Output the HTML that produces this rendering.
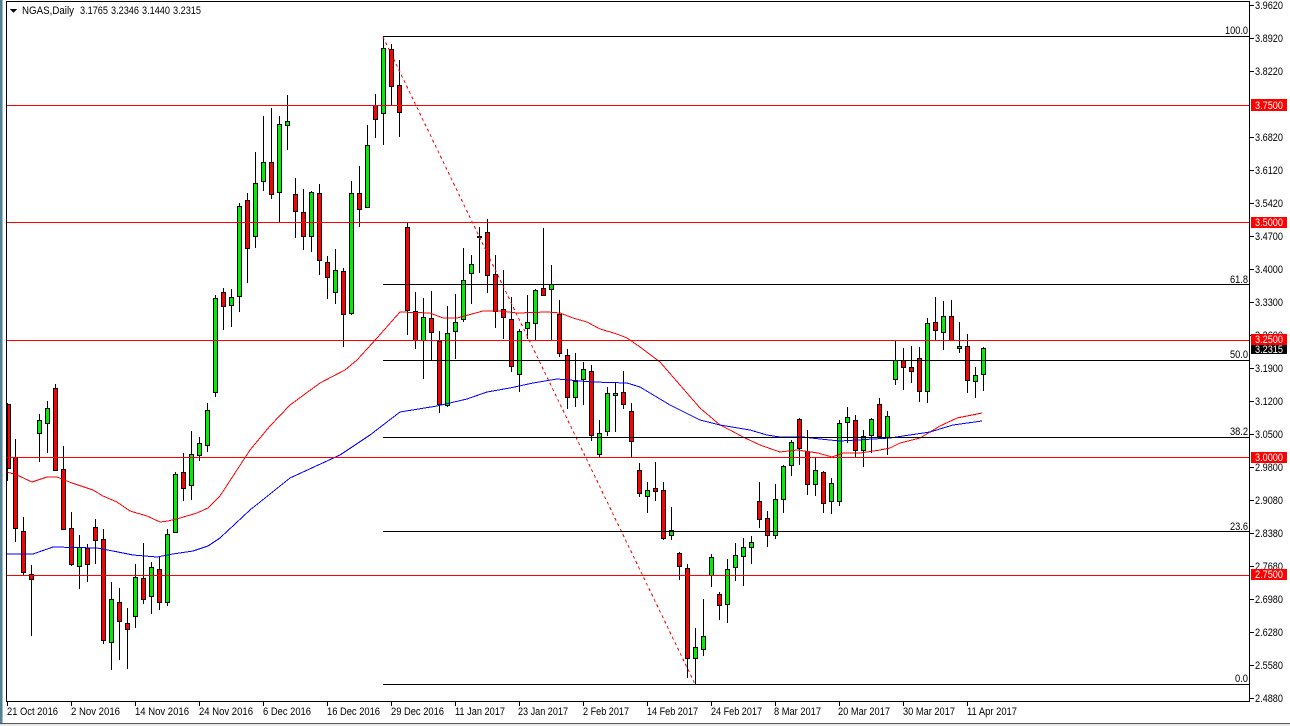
<!DOCTYPE html>
<html><head><meta charset="utf-8"><title>NGAS,Daily</title>
<style>
html,body{margin:0;padding:0;background:#fff;width:1290px;height:726px;overflow:hidden}
svg{display:block;position:absolute;left:0;top:0}
text{font-family:"Liberation Sans",sans-serif;font-size:11px;fill:#000}
</style></head><body>
<svg width="1290" height="726" viewBox="0 0 1290 726" xmlns="http://www.w3.org/2000/svg">
<rect width="1290" height="726" fill="#fff"/>
<rect x="0" y="0" width="2" height="723" fill="#4f8296"/>
<rect x="2" y="0" width="1" height="723" fill="#a9b8c0"/>
<rect x="0" y="723" width="1290" height="1" fill="#555"/>
<rect x="0" y="724" width="1290" height="2" fill="#e8e8e8"/>
<g shape-rendering="crispEdges">
<path d="M6.5 1.5H1249.5V701.5H6.5Z" fill="none" stroke="#000"/>
<path d="M1250 5.5h4M1250 38.5h4M1250 71.5h4M1250 137.5h4M1250 170.5h4M1250 203.5h4M1250 236.5h4M1250 269.5h4M1250 302.5h4M1250 335.5h4M1250 368.5h4M1250 401.5h4M1250 434.5h4M1250 467.5h4M1250 500.5h4M1250 533.5h4M1250 566.5h4M1250 599.5h4M1250 632.5h4M1250 665.5h4M1250 698.5h4" stroke="#000"/>
<path d="M7.5 702v4M71.5 702v4M135.5 702v4M199.5 702v4M263.5 702v4M327.5 702v4M391.5 702v4M455.5 702v4M519.5 702v4M583.5 702v4M647.5 702v4M711.5 702v4M775.5 702v4M839.5 702v4M903.5 702v4M967.5 702v4" stroke="#000"/>
<!-- wicks -->
<path stroke="#000" fill="none" d="M7.5 403V481M15.5 439V542M23.5 517V575M31.5 565V636M39.5 414V462M47.5 401V453M55.5 384V470M63.5 446V530M71.5 512V566M79.5 535V589M87.5 544V582M95.5 519V564M103.5 529V644M111.5 582V670M119.5 588V660M127.5 608V669M135.5 564V628M143.5 543V604M151.5 562V614M159.5 557V610M167.5 529V606M175.5 472V532M183.5 453V501M191.5 431V500M199.5 437V461M207.5 403V452M215.5 295V397M223.5 288V330M231.5 289V327M239.5 203V312M247.5 193V283M255.5 152V248M263.5 116V191M271.5 108V199M279.5 116V222M287.5 95V150M295.5 178V238M303.5 189V250M311.5 191V252M319.5 184V275M327.5 256V299M335.5 249V304M343.5 268V347M351.5 181V315M359.5 166V227M367.5 125V208M375.5 94V138M383.5 36V145M391.5 44V105M399.5 60V137M407.5 223V335M415.5 292V349M423.5 298V379M431.5 291V360M439.5 331V413M447.5 306V407M455.5 294V359M463.5 248V322M471.5 255V304M479.5 227V273M487.5 219V293M495.5 255V328M503.5 270V339M511.5 297V372M519.5 329V392M527.5 295V339M535.5 289V340M543.5 228V295M551.5 265V340M559.5 300V357M567.5 349V409M575.5 353V407M583.5 362V405M591.5 365V441M599.5 420V457M607.5 387V436M615.5 383V432M623.5 371V409M631.5 403V457M639.5 463V497M647.5 482V513M655.5 462V501M663.5 482V540M671.5 507V540M679.5 552V580M687.5 564V678M695.5 628V684M703.5 599V656M711.5 554V587M719.5 592V620M727.5 559V623M735.5 543V581M743.5 538V586M751.5 536V564M759.5 482V528M767.5 511V547M775.5 484V539M783.5 465V513M791.5 440V476M799.5 418V465M807.5 430V495M815.5 458V496M823.5 471V513M831.5 478V514M839.5 420V506M847.5 407V443M855.5 415V457M863.5 430V467M871.5 418V453M879.5 398V439M887.5 411V455M895.5 341V385M903.5 348V390M911.5 346V383M919.5 347V402M927.5 318V403M935.5 297V340M943.5 301V350M951.5 300V340M959.5 322V353M967.5 334V393M975.5 367V398M983.5 347V391"/>
<!-- red bodies -->
<path stroke="#000" fill="#f00" d="M7.5 404.5h3V468.5h-3zM13.5 457.5h4V528.5h-4zM21.5 531.5h4V572.5h-4zM29.5 574.5h4V579.5h-4zM53.5 388.5h4V470.5h-4zM61.5 469.5h4V529.5h-4zM69.5 528.5h4V564.5h-4zM85.5 548.5h4V564.5h-4zM93.5 527.5h4V540.5h-4zM101.5 539.5h4V640.5h-4zM117.5 602.5h4V621.5h-4zM125.5 623.5h4V629.5h-4zM141.5 578.5h4V599.5h-4zM157.5 569.5h4V602.5h-4zM181.5 472.5h4V488.5h-4zM221.5 292.5h4V306.5h-4zM245.5 200.5h4V248.5h-4zM269.5 162.5h4V194.5h-4zM293.5 194.5h4V211.5h-4zM301.5 212.5h4V236.5h-4zM317.5 193.5h4V260.5h-4zM325.5 262.5h4V277.5h-4zM341.5 271.5h4V314.5h-4zM357.5 193.5h4V209.5h-4zM373.5 105.5h4V119.5h-4zM389.5 49.5h4V86.5h-4zM397.5 85.5h4V112.5h-4zM405.5 227.5h4V310.5h-4zM413.5 311.5h4V340.5h-4zM429.5 318.5h4V332.5h-4zM437.5 341.5h4V404.5h-4zM485.5 232.5h4V275.5h-4zM493.5 274.5h4V311.5h-4zM501.5 309.5h4V317.5h-4zM509.5 319.5h4V366.5h-4zM541.5 288.5h4V295.5h-4zM557.5 314.5h4V353.5h-4zM565.5 355.5h4V397.5h-4zM589.5 371.5h4V435.5h-4zM621.5 392.5h4V404.5h-4zM629.5 411.5h4V441.5h-4zM637.5 470.5h4V493.5h-4zM653.5 488.5h4V491.5h-4zM661.5 490.5h4V538.5h-4zM677.5 553.5h4V566.5h-4zM685.5 568.5h4V658.5h-4zM717.5 594.5h4V605.5h-4zM757.5 501.5h4V519.5h-4zM765.5 518.5h4V535.5h-4zM797.5 419.5h4V448.5h-4zM805.5 451.5h4V484.5h-4zM821.5 472.5h4V503.5h-4zM853.5 420.5h4V450.5h-4zM877.5 404.5h4V436.5h-4zM901.5 360.5h4V367.5h-4zM909.5 367.5h4V371.5h-4zM917.5 358.5h4V391.5h-4zM933.5 322.5h4V330.5h-4zM949.5 316.5h4V340.5h-4zM965.5 346.5h4V380.5h-4z"/>
<!-- green bodies -->
<path stroke="#000" fill="#00ee00" d="M37.5 420.5h4V433.5h-4zM45.5 408.5h4V423.5h-4zM77.5 547.5h4V566.5h-4zM109.5 599.5h4V642.5h-4zM133.5 577.5h4V616.5h-4zM149.5 567.5h4V596.5h-4zM165.5 534.5h4V602.5h-4zM173.5 474.5h4V532.5h-4zM189.5 454.5h4V485.5h-4zM197.5 443.5h4V455.5h-4zM205.5 410.5h4V445.5h-4zM213.5 298.5h4V392.5h-4zM229.5 297.5h4V305.5h-4zM237.5 206.5h4V296.5h-4zM253.5 183.5h4V236.5h-4zM261.5 162.5h4V181.5h-4zM277.5 124.5h4V192.5h-4zM285.5 121.5h4V125.5h-4zM309.5 192.5h4V236.5h-4zM333.5 270.5h4V292.5h-4zM349.5 193.5h4V313.5h-4zM365.5 145.5h4V207.5h-4zM381.5 48.5h4V113.5h-4zM421.5 317.5h4V340.5h-4zM445.5 333.5h4V405.5h-4zM453.5 322.5h4V331.5h-4zM461.5 280.5h4V319.5h-4zM469.5 264.5h4V273.5h-4zM517.5 331.5h4V374.5h-4zM525.5 322.5h4V328.5h-4zM533.5 290.5h4V323.5h-4zM549.5 284.5h4V289.5h-4zM573.5 381.5h4V397.5h-4zM581.5 369.5h4V379.5h-4zM597.5 433.5h4V454.5h-4zM605.5 393.5h4V431.5h-4zM613.5 393.5h4V395.5h-4zM645.5 490.5h4V496.5h-4zM669.5 530.5h4V535.5h-4zM693.5 647.5h4V658.5h-4zM701.5 636.5h4V649.5h-4zM709.5 557.5h4V575.5h-4zM725.5 569.5h4V604.5h-4zM733.5 555.5h4V567.5h-4zM741.5 547.5h4V556.5h-4zM749.5 542.5h4V547.5h-4zM773.5 499.5h4V535.5h-4zM781.5 466.5h4V499.5h-4zM789.5 442.5h4V465.5h-4zM813.5 470.5h4V484.5h-4zM829.5 483.5h4V501.5h-4zM837.5 423.5h4V501.5h-4zM845.5 417.5h4V422.5h-4zM861.5 436.5h4V450.5h-4zM869.5 419.5h4V435.5h-4zM885.5 416.5h4V437.5h-4zM893.5 360.5h4V379.5h-4zM925.5 323.5h4V391.5h-4zM941.5 316.5h4V332.5h-4zM957.5 346.5h4V348.5h-4zM973.5 375.5h4V381.5h-4zM981.5 348.5h4V374.5h-4z"/>
<rect x="477" y="236" width="5" height="2" fill="#000"/>
<!-- moving averages -->
<path fill="none" stroke="#f00" stroke-width="1" d="M7 472L17 475L32 482L47 477L57 477L72 483L93 490L103 496L117 502L130 511L147 516L160 522L168 521L180 518L197 513L208 508L220 496L250 450L270 426L290 405L320 383L345 370L357 360L377 338L400 312L430 313L443 318L457 318L483 311L500 311L517 313L547 312L560 313L573 318L587 322L600 329L617 334L627 338L640 347L660 362L680 385L700 408L720 425L730 430L743 437L760 445L780 452L797 450L818 453L832 457L843 453L860 453L880 450L890 448L900 443L920 438L940 426L957 418L982 413"/>
<path fill="none" stroke="#00f" stroke-width="1" d="M7 554L33 554L53 547L97 548L113 551L133 555L157 557L173 554L193 551L208 546L220 538L250 510L290 478L340 455L370 435L400 412L437 406L467 399L487 392L510 388L533 383L557 379L593 382L627 383L640 387L670 405L700 420L720 425L750 430L767 435L780 437L803 437L820 439L840 441L890 438L903 436L930 432L953 425L982 421"/>
<!-- fib trendline -->
<path fill="none" stroke="#f00" stroke-width="1" stroke-dasharray="3 3" d="M383 37L695 684"/>
<!-- horizontal red lines -->
<path stroke="#f00" fill="none" d="M7 105.5H1249M7 222.5H1249M7 340.5H1249M7 457.5H1249M7 575.5H1249"/>
<!-- fib levels -->
<path stroke="#000" fill="none" d="M383 36.5H1249M383 284.5H1249M383 360.5H1249M383 437.5H1249M383 531.5H1249M383 684.5H1249"/>
<path d="M10 9h7l-3.5 4z" fill="#000"/>
</g>
<!-- header -->
<text x="22" y="14" textLength="52" lengthAdjust="spacingAndGlyphs">NGAS,Daily</text>
<text x="80" y="14" textLength="28" lengthAdjust="spacingAndGlyphs">3.1765</text>
<text x="111" y="14" textLength="28" lengthAdjust="spacingAndGlyphs">3.2346</text>
<text x="142" y="14" textLength="28" lengthAdjust="spacingAndGlyphs">3.1440</text>
<text x="173" y="14" textLength="28" lengthAdjust="spacingAndGlyphs">3.2315</text>
<!-- fib labels -->
<text x="1225" y="34" textLength="23" lengthAdjust="spacingAndGlyphs">100.0</text>
<text x="1230" y="283" textLength="18" lengthAdjust="spacingAndGlyphs">61.8</text>
<text x="1230" y="358" textLength="18" lengthAdjust="spacingAndGlyphs">50.0</text>
<text x="1230" y="435" textLength="18" lengthAdjust="spacingAndGlyphs">38.2</text>
<text x="1230" y="530" textLength="18" lengthAdjust="spacingAndGlyphs">23.6</text>
<text x="1235" y="682" textLength="13" lengthAdjust="spacingAndGlyphs">0.0</text>
<!-- price axis -->
<g>
<text x="1255" y="9" textLength="28" lengthAdjust="spacingAndGlyphs">3.9620</text>
<text x="1255" y="42" textLength="28" lengthAdjust="spacingAndGlyphs">3.8920</text>
<text x="1255" y="75" textLength="28" lengthAdjust="spacingAndGlyphs">3.8220</text>
<text x="1255" y="141" textLength="28" lengthAdjust="spacingAndGlyphs">3.6820</text>
<text x="1255" y="174" textLength="28" lengthAdjust="spacingAndGlyphs">3.6120</text>
<text x="1255" y="207" textLength="28" lengthAdjust="spacingAndGlyphs">3.5420</text>
<text x="1255" y="240" textLength="28" lengthAdjust="spacingAndGlyphs">3.4700</text>
<text x="1255" y="273" textLength="28" lengthAdjust="spacingAndGlyphs">3.4000</text>
<text x="1255" y="306" textLength="28" lengthAdjust="spacingAndGlyphs">3.3300</text>
<text x="1255" y="339" textLength="28" lengthAdjust="spacingAndGlyphs">3.2600</text>
<text x="1255" y="372" textLength="28" lengthAdjust="spacingAndGlyphs">3.1900</text>
<text x="1255" y="405" textLength="28" lengthAdjust="spacingAndGlyphs">3.1200</text>
<text x="1255" y="438" textLength="28" lengthAdjust="spacingAndGlyphs">3.0500</text>
<text x="1255" y="471" textLength="28" lengthAdjust="spacingAndGlyphs">2.9800</text>
<text x="1255" y="504" textLength="28" lengthAdjust="spacingAndGlyphs">2.9080</text>
<text x="1255" y="537" textLength="28" lengthAdjust="spacingAndGlyphs">2.8380</text>
<text x="1255" y="570" textLength="28" lengthAdjust="spacingAndGlyphs">2.7680</text>
<text x="1255" y="603" textLength="28" lengthAdjust="spacingAndGlyphs">2.6980</text>
<text x="1255" y="636" textLength="28" lengthAdjust="spacingAndGlyphs">2.6280</text>
<text x="1255" y="669" textLength="28" lengthAdjust="spacingAndGlyphs">2.5580</text>
<text x="1255" y="702" textLength="28" lengthAdjust="spacingAndGlyphs">2.4880</text>
</g>
<!-- axis tags -->
<g shape-rendering="crispEdges">
<rect x="1251" y="99" width="36" height="12" fill="#f00"/>
<rect x="1251" y="217" width="36" height="11" fill="#f00"/>
<rect x="1251" y="334" width="36" height="11" fill="#f00"/>
<rect x="1251" y="345" width="36" height="9" fill="#000"/>
<rect x="1251" y="452" width="36" height="11" fill="#f00"/>
<rect x="1251" y="569" width="36" height="11" fill="#f00"/>
</g>
<text x="1255" y="109" textLength="28" lengthAdjust="spacingAndGlyphs" style="fill:#fff">3.7500</text>
<text x="1255" y="226" textLength="28" lengthAdjust="spacingAndGlyphs" style="fill:#fff">3.5000</text>
<text x="1255" y="343" textLength="28" lengthAdjust="spacingAndGlyphs" style="fill:#fff">3.2500</text>
<text x="1255" y="353" textLength="28" lengthAdjust="spacingAndGlyphs" style="fill:#fff">3.2315</text>
<text x="1255" y="461" textLength="28" lengthAdjust="spacingAndGlyphs" style="fill:#fff">3.0000</text>
<text x="1255" y="578" textLength="28" lengthAdjust="spacingAndGlyphs" style="fill:#fff">2.7500</text>
<!-- date axis -->
<g>
<text x="7" y="715" textLength="51" lengthAdjust="spacingAndGlyphs">21 Oct 2016</text>
<text x="71" y="715" textLength="49" lengthAdjust="spacingAndGlyphs">2 Nov 2016</text>
<text x="135" y="715" textLength="54" lengthAdjust="spacingAndGlyphs">14 Nov 2016</text>
<text x="199" y="715" textLength="54" lengthAdjust="spacingAndGlyphs">24 Nov 2016</text>
<text x="263" y="715" textLength="48" lengthAdjust="spacingAndGlyphs">6 Dec 2016</text>
<text x="327" y="715" textLength="53" lengthAdjust="spacingAndGlyphs">16 Dec 2016</text>
<text x="391" y="715" textLength="53" lengthAdjust="spacingAndGlyphs">29 Dec 2016</text>
<text x="455" y="715" textLength="50" lengthAdjust="spacingAndGlyphs">11 Jan 2017</text>
<text x="518" y="715" textLength="50" lengthAdjust="spacingAndGlyphs">23 Jan 2017</text>
<text x="583" y="715" textLength="46" lengthAdjust="spacingAndGlyphs">2 Feb 2017</text>
<text x="647" y="715" textLength="51" lengthAdjust="spacingAndGlyphs">14 Feb 2017</text>
<text x="711" y="715" textLength="51" lengthAdjust="spacingAndGlyphs">24 Feb 2017</text>
<text x="774" y="715" textLength="47" lengthAdjust="spacingAndGlyphs">8 Mar 2017</text>
<text x="838" y="715" textLength="52" lengthAdjust="spacingAndGlyphs">20 Mar 2017</text>
<text x="903" y="715" textLength="52" lengthAdjust="spacingAndGlyphs">30 Mar 2017</text>
<text x="967" y="715" textLength="50" lengthAdjust="spacingAndGlyphs">11 Apr 2017</text>
</g>
</svg>
</body></html>
